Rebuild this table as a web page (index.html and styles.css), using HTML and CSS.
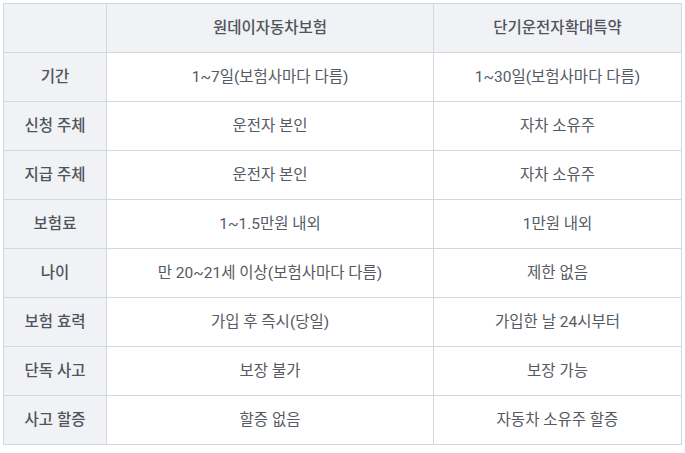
FILE: index.html
```html
<!DOCTYPE html>
<html lang="ko">
<head>
<meta charset="utf-8">
<link rel="stylesheet" href="styles.css">
</head>
<body>
<table class="cmp">
  <colgroup>
    <col class="c1"><col class="c2"><col class="c3">
  </colgroup>
  <thead>
    <tr><th></th><th>원데이자동차보험</th><th>단기운전자확대특약</th></tr>
  </thead>
  <tbody>
    <tr><th>기간</th><td>1~7일(보험사마다 다름)</td><td>1~30일(보험사마다 다름)</td></tr>
    <tr><th>신청 주체</th><td>운전자 본인</td><td>자차 소유주</td></tr>
    <tr><th>지급 주체</th><td>운전자 본인</td><td>자차 소유주</td></tr>
    <tr><th>보험료</th><td>1~1.5만원 내외</td><td>1만원 내외</td></tr>
    <tr><th>나이</th><td>만 20~21세 이상(보험사마다 다름)</td><td>제한 없음</td></tr>
    <tr><th>보험 효력</th><td>가입 후 즉시(당일)</td><td>가입한 날 24시부터</td></tr>
    <tr><th>단독 사고</th><td>보장 불가</td><td>보장 가능</td></tr>
    <tr><th>사고 할증</th><td>할증 없음</td><td>자동차 소유주 할증</td></tr>
  </tbody>
</table>
</body>
</html>
```

FILE: styles.css
```css
html, body {
  margin: 0;
  padding: 0;
  background: #ffffff;
}
body {
  padding: 3px 0 0 3px;
  font-family: Roboto, "Noto Sans CJK KR", "Noto Sans", sans-serif;
  font-size: 15.5px;
  color: #555a63;
}
.cmp {
  border-collapse: collapse;
  width: 678px;
  table-layout: fixed;
}
.c1 { width: 103px; }
.c2 { width: 327px; }
.c3 { width: 248px; }
.cmp th, .cmp td {
  border: 1px solid #d3d7de;
  height: 48px;
  padding: 0;
  text-align: center;
  vertical-align: middle;
  line-height: 20px;
}
.cmp thead th,
.cmp tbody th {
  background: #f1f2f5;
  font-weight: 500;
  color: #4f545c;
}
.cmp td {
  font-weight: 400;
}
```
